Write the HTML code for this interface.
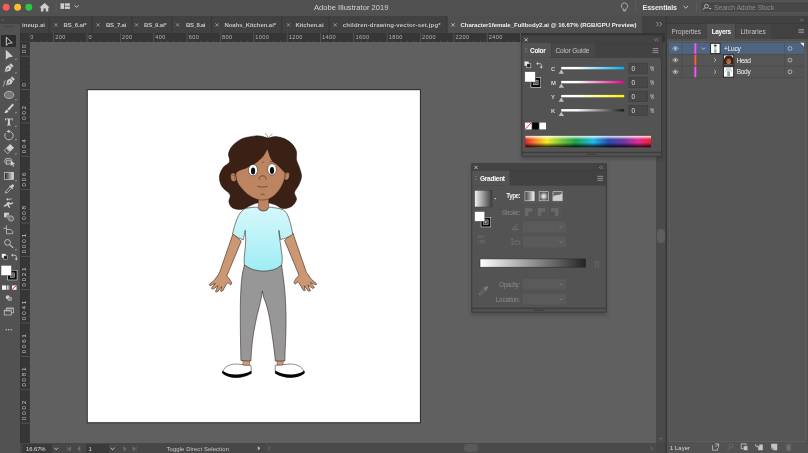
<!DOCTYPE html>
<html>
<head>
<meta charset="utf-8">
<title>Adobe Illustrator 2019</title>
<style>
*{box-sizing:border-box;margin:0;padding:0}
html,body{width:808px;height:453px;overflow:hidden;background:#606060}
body{font-family:"Liberation Sans",sans-serif;font-size:6.5px;color:#d6d6d6;position:relative}
.a{position:absolute}
.t{position:absolute;white-space:pre;line-height:1.15}
svg{position:absolute;overflow:visible}
#w{position:absolute;left:0;top:0;width:808px;height:453px;will-change:transform}

</style>
</head>
<body>
<div id="w">
<div class="a" style="left:30px;top:42px;width:626px;height:401px;background:#606060"></div>
<svg style="left:0;top:0" width="808" height="453" viewBox="0 0 808 453"><rect x="86.8" y="89.2" width="334.1" height="334.1" fill="#2b2b2b"/><rect x="87.8" y="90.2" width="332.1" height="332" fill="#fff"/></svg>
<svg style="left:0;top:0" width="808" height="453" viewBox="0 0 808 453"><defs><linearGradient id="sh" x1="0" x2="0" y1="0" y2="1"><stop offset="0" stop-color="#d6f8fb"/><stop offset="1" stop-color="#9fedf5"/></linearGradient></defs><path d="M268.2 138.0C266.5 137.9 264.1 136.7 262.0 136.3C259.9 136.0 258.3 135.7 255.8 135.9C253.3 136.1 249.7 136.6 247.0 137.3C244.3 138.0 242.2 138.5 239.8 139.9C237.4 141.3 234.2 143.7 232.3 146.0C230.4 148.3 228.9 151.2 228.5 153.8C228.1 156.4 230.5 159.5 229.6 161.8C228.7 164.1 224.7 165.2 223.0 167.7C221.3 170.2 219.6 173.5 219.4 176.7C219.2 179.8 220.2 183.6 222.0 186.6C223.8 189.6 228.8 192.1 229.9 194.6C231.1 197.1 228.6 199.3 228.9 201.5C229.2 203.7 230.2 206.2 231.9 207.5C233.6 208.8 236.8 209.3 238.9 209.5C241.1 209.7 242.5 209.3 244.8 208.5C247.1 207.7 249.8 205.6 252.8 204.5C255.8 203.4 259.1 202.0 262.7 202.0C266.3 202.0 271.3 203.4 274.6 204.5C277.9 205.6 279.8 208.2 282.6 208.5C285.4 208.8 289.2 208.0 291.5 206.5C293.8 205.0 296.0 201.9 296.5 199.6C297.0 197.3 294.2 194.9 294.5 192.6C294.8 190.3 297.3 188.2 298.5 185.6C299.7 182.9 301.3 179.7 301.5 176.7C301.7 173.7 300.3 170.5 299.5 167.7C298.7 164.9 297.0 162.6 296.5 159.8C296.0 157.0 297.1 153.7 296.3 151.0C295.5 148.3 293.7 145.7 291.7 143.6C289.7 141.5 286.8 139.8 284.3 138.6C281.8 137.4 278.9 137.0 276.9 136.7C274.8 136.4 273.4 136.8 272.0 137.0C270.6 137.2 269.9 138.1 268.2 138.0Z" fill="#3b2016" stroke="#1c0e08" stroke-width="0.5"/><path d="M222.400 372.400C223.500 369 225.500 366.800 228.500 365.500C231.500 364.200 235 363.800 238.500 364.200L251 365.300L251.300 373.400C247 376.200 241 377.600 236 377.500C230.500 377.400 225.500 375.600 222.400 372.400Z" fill="#fff" stroke="#2a160e" stroke-width="0.5"/><path d="M222.700 370.800C226.500 373.600 231 374.700 236 374.600C241.500 374.500 247 373.200 251.400 370.700L251.400 373.600C247 376.400 241 377.900 236 377.800C230.500 377.700 225 376 221.900 372.700Z" fill="#050505"/><path d="M275.300 365.300L288 364.200C291.500 363.800 295 364.200 298 365.500C301 366.800 303.200 369 304.400 372.400C301.300 375.500 296.500 377.200 291 377.400C285.500 377.500 279.500 376 275.200 373.200Z" fill="#fff" stroke="#2a160e" stroke-width="0.5"/><path d="M275.200 370.500C279.500 373 285 374.400 290.500 374.500C295.500 374.600 300.300 373.600 304.100 370.800L304.900 372.700C301.800 376 296.500 377.500 291 377.700C285.500 377.800 279.500 376.300 275.200 373.500Z" fill="#050505"/><path d="M242.800 360h6.800l-0.200 5.200h-6.400z M276.900 360h6.400l-0.300 5h-5.800z" fill="#d99a72" stroke="#2a160e" stroke-width="0.4"/><path d="M233.0 233.6 L241.2 241.2 L226.8 276.0 L229.5 279.0 L231.9 283.0 L230.6 285.0 L227.8 282.5 L226.5 284.0 L222.6 291.0 L220.6 291.3 L221.5 286.5 L217.4 292.0 L215.4 291.6 L218.0 285.8 L213.0 289.3 L211.4 288.3 L215.4 283.3 L210.0 285.8 L209.2 284.5 L214.5 280.0 L219.4 273.1Z" fill="#cb9873" stroke="#2a160e" stroke-width="0.55" stroke-linejoin="round"/><path d="M292.8 232.8 L284.6 240.4 L299.0 275.2 L296.3 278.2 L293.9 282.2 L295.2 284.2 L298.0 281.7 L299.3 283.2 L303.2 290.2 L305.2 290.5 L304.3 285.7 L308.4 291.2 L310.4 290.8 L307.8 285.0 L312.8 288.5 L314.4 287.5 L310.4 282.5 L315.8 285.0 L316.6 283.7 L311.3 279.2 L306.4 272.3Z" fill="#cb9873" stroke="#2a160e" stroke-width="0.55" stroke-linejoin="round"/><path d="M244.4 265.0C244.0 266.7 242.8 271.1 242.2 275.0C241.6 278.9 241.2 284.0 240.9 288.7C240.6 293.4 240.5 298.2 240.4 303.0C240.3 307.8 240.3 311.2 240.3 317.4C240.3 323.6 240.4 332.8 240.5 340.0C240.6 347.2 240.8 357.0 240.9 360.4C241.8 360.5 244.3 360.8 246.0 360.9C247.7 361.0 250.1 361.0 250.9 361.0C251.1 358.3 251.5 349.9 252.0 345.0C252.5 340.1 253.1 336.2 253.8 331.7C254.6 327.2 255.6 322.3 256.5 318.0C257.4 313.7 258.7 309.4 259.5 305.9C260.3 302.4 260.9 299.5 261.4 297.0C261.9 294.5 262.2 292.0 262.4 291.0C262.6 292.0 262.9 294.5 263.6 297.0C264.3 299.5 265.7 302.4 266.7 305.9C267.7 309.4 268.7 313.7 269.5 318.0C270.3 322.3 270.9 326.9 271.6 331.7C272.3 336.5 273.2 342.1 273.8 347.0C274.4 351.9 275.1 358.7 275.3 361.0C276.1 361.0 278.4 361.1 280.0 361.1C281.6 361.1 284.0 361.0 284.8 361.0C284.9 358.3 285.2 349.9 285.4 345.0C285.6 340.1 285.8 336.7 285.9 331.7C286.0 326.7 286.1 320.7 286.0 315.0C285.9 309.3 285.6 302.6 285.3 297.3C285.0 292.0 284.5 287.3 284.0 283.0C283.5 278.7 282.9 274.5 282.5 271.5C282.1 268.5 281.8 266.1 281.6 265.0Z" fill="#979797" stroke="#2a160e" stroke-width="0.55" stroke-linejoin="round"/><path d="M258.300 196v10c0 3 2.400 5.600 5.200 5.600s5.200-2.600 5.200-5.600v-10z" fill="#bc8461" stroke="#2a160e" stroke-width="0.4"/><path d="M257.5 207.1C256.2 207.2 252.3 207.3 250.0 207.7C247.7 208.1 245.5 208.2 243.6 209.5C241.7 210.8 240.0 213.1 238.6 215.5C237.2 217.9 236.2 221.0 235.2 224.0C234.2 227.0 233.0 232.0 232.6 233.6C233.4 234.2 235.7 236.3 237.5 237.3C239.3 238.3 242.2 239.4 243.2 239.8C243.4 239.0 244.0 236.6 244.3 235.0C244.6 233.4 245.0 231.1 245.2 230.3C245.3 231.9 245.7 236.7 245.7 240.0C245.7 243.3 245.2 247.0 245.0 250.0C244.8 253.0 244.3 255.5 244.2 258.0C244.1 260.5 244.3 263.7 244.3 264.8C245.6 265.5 248.8 268.1 252.0 269.2C255.2 270.2 259.7 271.1 263.5 271.1C267.3 271.1 271.9 270.2 275.0 269.2C278.1 268.1 280.7 265.5 281.8 264.8C281.9 263.7 282.3 260.8 282.2 258.0C282.1 255.2 281.4 251.3 281.0 248.0C280.6 244.7 280.0 240.9 279.6 238.0C279.2 235.1 279.0 231.6 278.9 230.3C279.0 231.1 279.4 233.5 279.7 235.0C280.0 236.5 280.5 238.8 280.6 239.5C281.7 239.2 285.0 238.5 287.0 237.6C289.0 236.7 291.8 234.9 292.8 234.3C292.4 232.6 291.5 227.2 290.6 224.0C289.7 220.8 288.6 217.2 287.5 214.9C286.4 212.6 285.3 211.5 284.0 210.4C282.7 209.3 281.3 209.1 279.5 208.6C277.7 208.1 274.8 207.8 273.0 207.6C271.2 207.3 269.7 207.2 269.0 207.1C268.7 207.6 267.9 209.3 267.0 210.0C266.1 210.7 264.6 211.0 263.4 211.0C262.2 211.0 260.6 210.7 259.6 210.0C258.6 209.3 257.9 207.6 257.5 207.1Z" fill="url(#sh)" stroke="#2a160e" stroke-width="0.55" stroke-linejoin="round"/><ellipse cx="233.500" cy="177.300" rx="2.900" ry="4.300" fill="#bc8461" stroke="#2a160e" stroke-width="0.45" transform="rotate(-10 233.500 177.300)"/><ellipse cx="286.500" cy="175.800" rx="2.900" ry="4.300" fill="#bc8461" stroke="#2a160e" stroke-width="0.45" transform="rotate(10 286.500 175.800)"/><path d="M232.400 176c0.800-1.600 2.800-1.200 2.800 0.600c0 1.200-1 1.600-1.200 2.800 M287.600 174.400c-0.800-1.600-2.800-1.200-2.800 0.600c0 1.200 1 1.600 1.200 2.800" stroke="#2a160e" stroke-width="0.4" fill="none"/><path d="M267.3 149.0C270.3 149.5 273.3 151.5 276.0 154.0C278.7 156.5 282.0 160.8 283.5 164.0C285.0 167.2 284.9 170.5 285.0 173.0C285.1 175.5 284.7 177.2 284.3 179.0C283.9 180.8 283.7 181.9 282.6 184.0C281.6 186.1 279.9 189.3 278.0 191.6C276.1 193.9 273.5 196.4 271.0 197.8C268.5 199.2 265.6 199.8 263.0 200.0C260.4 200.2 258.1 199.7 255.6 198.8C253.1 197.9 250.4 196.4 247.9 194.5C245.4 192.6 242.6 189.5 240.8 187.3C239.0 185.2 238.0 183.8 237.2 181.6C236.4 179.4 235.9 176.8 236.0 174.0C236.1 171.2 236.2 168.0 238.0 165.0C239.8 162.0 243.7 158.3 247.0 156.0C250.3 153.7 254.6 152.2 258.0 151.0C261.4 149.8 264.3 148.5 267.3 149.0Z" fill="#bc8461" stroke="#2a160e" stroke-width="0.4"/><path d="M267.3 149.3C266.7 150.4 265.2 153.8 263.7 155.8C262.1 157.8 260.0 159.8 258.0 161.5C256.0 163.2 253.7 164.6 251.5 165.8C249.3 167.0 247.1 167.9 245.1 168.7C243.1 169.5 240.8 170.1 239.3 170.8C237.8 171.5 236.7 172.6 236.2 173.0 L232.0 171.0 L229.5 160.0 L235.0 148.0 L250.0 140.5 L267.0 139.0 L284.0 141.5 L293.0 150.0 L294.0 162.0 L290.0 172.0 L285.2 173 L285.2 173.0C284.5 172.3 282.3 170.1 280.9 168.7C279.5 167.3 278.0 165.6 276.6 164.4C275.2 163.2 273.5 162.9 272.3 161.5C271.1 160.1 269.9 156.8 269.4 155.8Z" fill="#3b2016"/><path d="M265 133.400c1.600 1 2.600 2.600 3.200 4.600 M272.600 134.200c-2 0.600-3.200 2-3.800 3.800" stroke="#505050" stroke-width="0.55" fill="none"/><ellipse cx="253" cy="170.100" rx="4.600" ry="5.700" fill="#fff" stroke="#2a160e" stroke-width="0.5"/><ellipse cx="272" cy="169.400" rx="4.400" ry="5.700" fill="#fff" stroke="#2a160e" stroke-width="0.5"/><ellipse cx="253.100" cy="170.900" rx="2.100" ry="3.500" fill="#0a0a0a"/><ellipse cx="272" cy="170.400" rx="2.100" ry="3.500" fill="#0a0a0a"/><path d="M262 162.300l2.200-0.200 M269.600 161.600l2.200 0" stroke="#2a160e" stroke-width="0.4"/><path d="M259.800 179.600c-0.800-0.600-0.900-1.800-0.200-2.600c1.400-1.600 4.600-1.600 6 0c0.700 0.800 0.600 2-0.200 2.600" stroke="#2a160e" stroke-width="0.5" fill="none"/><path d="M257.300 186.300c3.400 1 7 1 10.400 0" stroke="#2a160e" stroke-width="0.5" fill="none"/><path d="M260.500 195.300c1.200-1.600 3-1.600 4.200 0" stroke="#2a160e" stroke-width="0.5" fill="none"/></svg>
<div class="a" style="left:0;top:0;width:808px;height:16px;background:#515151"></div><svg style="left:0;top:0" width="808" height="16" viewBox="0 0 808 16">
<circle cx="6.2" cy="7.3" r="3.45" fill="#fc5b57"/>
<circle cx="17.6" cy="7.3" r="3.45" fill="#fdbc2e"/>
<circle cx="28.8" cy="7.3" r="3.45" fill="#29c941"/>
<path d="M39.5 7.6 L44.6 3 L49.7 7.6 L48.3 7.6 L48.3 11.4 L45.8 11.4 L45.8 8.6 L43.4 8.6 L43.4 11.4 L40.9 11.4 L40.9 7.6 Z" fill="#d0d0d0"/>
<rect x="55.6" y="1.5" width="0.8" height="11" fill="#606060"/>
<rect x="60.5" y="3.3" width="3.6" height="5.6" fill="#d0d0d0"/>
<rect x="64.9" y="3.3" width="5" height="2.4" fill="#d0d0d0"/>
<rect x="64.9" y="6.5" width="5" height="2.4" fill="#d0d0d0"/>
<path d="M74.6 5.3 L76.6 7.3 L78.6 5.3" stroke="#d0d0d0" stroke-width="0.9" fill="none"/>
<path d="M624.5 2.9 a3.1 3.1 0 0 1 1.5 5.8 v1.4 h-3 v-1.4 a3.1 3.1 0 0 1 1.5 -5.8z M623.3 11h2.4" stroke="#d0d0d0" stroke-width="0.7" fill="none"/>
<rect x="635" y="1.5" width="0.8" height="11" fill="#606060"/>
<path d="M683.6 6 L685.8 8.2 L688 6" stroke="#d0d0d0" stroke-width="0.9" fill="none"/>
<rect x="696" y="1.5" width="0.8" height="11" fill="#606060"/>
<rect x="700.6" y="1.8" width="108" height="10.5" fill="#474747" stroke="#5e5e5e" stroke-width="0.6"/>
<circle cx="706.5" cy="6.2" r="1.9" stroke="#c4c4c4" stroke-width="0.8" fill="none"/>
<path d="M705.2 7.600 L702.600 9.800 M708.900 8.600h2.400" stroke="#c4c4c4" stroke-width="0.9" fill="none"/>
</svg><span class="t" style="left:314.00px;top:4px;font-size:7.5px;color:#d4d4d4;letter-spacing:0.050px;">Adobe Illustrator 2019</span><span class="t" style="left:642.50px;top:4px;font-size:7.2px;color:#e8e8e8;font-weight:bold;letter-spacing:-0.106px;">Essentials</span><span class="t" style="left:714.00px;top:4px;font-size:6.9px;color:#8c8c8c;letter-spacing:-0.136px;">Search Adobe Stock</span>
<div class="a" style="left:0;top:16px;width:667px;height:17px;background:#414141"></div><div class="a" style="left:447px;top:16px;width:195px;height:17px;background:#4f4f4f"></div><span class="t" style="left:22.00px;top:22px;font-size:6px;color:#c4c4c4;font-weight:bold;letter-spacing:0.041px;">ineup.ai</span><span class="t" style="left:63.50px;top:22px;font-size:6px;color:#c4c4c4;font-weight:bold;letter-spacing:-0.127px;">BS_6.ai*</span><span class="t" style="left:106.00px;top:22px;font-size:6px;color:#c4c4c4;font-weight:bold;letter-spacing:-0.241px;">BS_7.ai</span><span class="t" style="left:144.00px;top:22px;font-size:6px;color:#c4c4c4;font-weight:bold;letter-spacing:-0.189px;">BS_9.ai*</span><span class="t" style="left:186.00px;top:22px;font-size:6px;color:#c4c4c4;font-weight:bold;letter-spacing:-0.384px;">BS_8.ai</span><span class="t" style="left:224.50px;top:22px;font-size:6px;color:#c4c4c4;font-weight:bold;letter-spacing:-0.070px;">Noahs_Kitchen.ai*</span><span class="t" style="left:295.50px;top:22px;font-size:6px;color:#c4c4c4;font-weight:bold;letter-spacing:-0.069px;">Kitchen.ai</span><span class="t" style="left:342.80px;top:22px;font-size:6px;color:#c4c4c4;font-weight:bold;letter-spacing:0.187px;">children-drawing-vector-set.jpg*</span><span class="t" style="left:460.40px;top:22px;font-size:6px;color:#f0f0f0;font-weight:bold;letter-spacing:-0.004px;">Character1female_Fullbody2.ai @ 16.67% (RGB/GPU Preview)</span><svg style="left:0;top:0" width="808" height="40" viewBox="0 0 808 40"><rect x="48.5" y="16" width="1" height="17" fill="#363636"/><path d="M54.4 23.299999999999997l3.2 3.2m0 -3.2l-3.2 3.2" stroke="#b0b0b0" stroke-width="0.7" fill="none"/><rect x="91.5" y="16" width="1" height="17" fill="#363636"/><path d="M96.4 23.299999999999997l3.2 3.2m0 -3.2l-3.2 3.2" stroke="#b0b0b0" stroke-width="0.7" fill="none"/><rect x="131.5" y="16" width="1" height="17" fill="#363636"/><path d="M134.9 23.299999999999997l3.2 3.2m0 -3.2l-3.2 3.2" stroke="#b0b0b0" stroke-width="0.7" fill="none"/><rect x="171.5" y="16" width="1" height="17" fill="#363636"/><path d="M175.9 23.299999999999997l3.2 3.2m0 -3.2l-3.2 3.2" stroke="#b0b0b0" stroke-width="0.7" fill="none"/><rect x="211.1" y="16" width="1" height="17" fill="#363636"/><path d="M215.4 23.299999999999997l3.2 3.2m0 -3.2l-3.2 3.2" stroke="#b0b0b0" stroke-width="0.7" fill="none"/><rect x="281.2" y="16" width="1" height="17" fill="#363636"/><path d="M286.9 23.299999999999997l3.2 3.2m0 -3.2l-3.2 3.2" stroke="#b0b0b0" stroke-width="0.7" fill="none"/><rect x="328.7" y="16" width="1" height="17" fill="#363636"/><path d="M333.59999999999997 23.299999999999997l3.2 3.2m0 -3.2l-3.2 3.2" stroke="#b0b0b0" stroke-width="0.7" fill="none"/><rect x="446.5" y="16" width="1" height="17" fill="#363636"/><path d="M451.4 23.299999999999997l3.2 3.2m0 -3.2l-3.2 3.2" stroke="#e0e0e0" stroke-width="0.7" fill="none"/><path d="M656.4 22 l2 2.2 l-2 2.2 M659.6 22 l2 2.2 l-2 2.2" stroke="#bdbdbd" stroke-width="0.7" fill="none"/></svg>
<div class="a" style="left:20px;top:33px;width:646px;height:9px;background:#363636"></div><div class="a" style="left:20px;top:42px;width:10.3px;height:401px;background:#363636"></div><span class="t" style="left:30.20px;top:34px;font-size:5.6px;color:#b4b4b4;">0</span><span class="t" style="left:55.25px;top:34px;font-size:5.6px;color:#b4b4b4;letter-spacing:0.385px;">200</span><span class="t" style="left:88.60px;top:34px;font-size:5.6px;color:#b4b4b4;letter-spacing:0.375px;">0</span><span class="t" style="left:121.95px;top:34px;font-size:5.6px;color:#b4b4b4;letter-spacing:0.385px;">200</span><span class="t" style="left:155.30px;top:34px;font-size:5.6px;color:#b4b4b4;letter-spacing:0.385px;">400</span><span class="t" style="left:188.65px;top:34px;font-size:5.6px;color:#b4b4b4;letter-spacing:0.385px;">600</span><span class="t" style="left:222.00px;top:34px;font-size:5.6px;color:#b4b4b4;letter-spacing:0.385px;">800</span><span class="t" style="left:255.35px;top:34px;font-size:5.6px;color:#b4b4b4;letter-spacing:0.387px;">1000</span><span class="t" style="left:288.70px;top:34px;font-size:5.6px;color:#b4b4b4;letter-spacing:0.387px;">1200</span><span class="t" style="left:322.05px;top:34px;font-size:5.6px;color:#b4b4b4;letter-spacing:0.387px;">1400</span><span class="t" style="left:355.40px;top:34px;font-size:5.6px;color:#b4b4b4;letter-spacing:0.387px;">1600</span><span class="t" style="left:388.75px;top:34px;font-size:5.6px;color:#b4b4b4;letter-spacing:0.387px;">1800</span><span class="t" style="left:422.10px;top:34px;font-size:5.6px;color:#b4b4b4;letter-spacing:0.387px;">2000</span><span class="t" style="left:455.45px;top:34px;font-size:5.6px;color:#b4b4b4;letter-spacing:0.387px;">2200</span><span class="t" style="left:488.80px;top:34px;font-size:5.6px;color:#b4b4b4;letter-spacing:0.387px;">2400</span><svg style="left:0;top:0" width="808" height="453" viewBox="0 0 808 453"><rect x="33.29" y="40.6" width="0.7" height="1.4" fill="#5a5a5a"/><rect x="39.96" y="40.6" width="0.7" height="1.4" fill="#5a5a5a"/><rect x="46.63" y="40.6" width="0.7" height="1.4" fill="#5a5a5a"/><rect x="53.25" y="33" width="0.8" height="9" fill="#5a5a5a"/><rect x="59.97" y="40.6" width="0.7" height="1.4" fill="#5a5a5a"/><rect x="66.64" y="40.6" width="0.7" height="1.4" fill="#5a5a5a"/><rect x="73.31" y="40.6" width="0.7" height="1.4" fill="#5a5a5a"/><rect x="79.98" y="40.6" width="0.7" height="1.4" fill="#5a5a5a"/><rect x="86.60" y="33" width="0.8" height="9" fill="#5a5a5a"/><rect x="93.32" y="40.6" width="0.7" height="1.4" fill="#5a5a5a"/><rect x="99.99" y="40.6" width="0.7" height="1.4" fill="#5a5a5a"/><rect x="106.66" y="40.6" width="0.7" height="1.4" fill="#5a5a5a"/><rect x="113.33" y="40.6" width="0.7" height="1.4" fill="#5a5a5a"/><rect x="119.95" y="33" width="0.8" height="9" fill="#5a5a5a"/><rect x="126.67" y="40.6" width="0.7" height="1.4" fill="#5a5a5a"/><rect x="133.34" y="40.6" width="0.7" height="1.4" fill="#5a5a5a"/><rect x="140.01" y="40.6" width="0.7" height="1.4" fill="#5a5a5a"/><rect x="146.68" y="40.6" width="0.7" height="1.4" fill="#5a5a5a"/><rect x="153.30" y="33" width="0.8" height="9" fill="#5a5a5a"/><rect x="160.02" y="40.6" width="0.7" height="1.4" fill="#5a5a5a"/><rect x="166.69" y="40.6" width="0.7" height="1.4" fill="#5a5a5a"/><rect x="173.36" y="40.6" width="0.7" height="1.4" fill="#5a5a5a"/><rect x="180.03" y="40.6" width="0.7" height="1.4" fill="#5a5a5a"/><rect x="186.65" y="33" width="0.8" height="9" fill="#5a5a5a"/><rect x="193.37" y="40.6" width="0.7" height="1.4" fill="#5a5a5a"/><rect x="200.04" y="40.6" width="0.7" height="1.4" fill="#5a5a5a"/><rect x="206.71" y="40.6" width="0.7" height="1.4" fill="#5a5a5a"/><rect x="213.38" y="40.6" width="0.7" height="1.4" fill="#5a5a5a"/><rect x="220.00" y="33" width="0.8" height="9" fill="#5a5a5a"/><rect x="226.72" y="40.6" width="0.7" height="1.4" fill="#5a5a5a"/><rect x="233.39" y="40.6" width="0.7" height="1.4" fill="#5a5a5a"/><rect x="240.06" y="40.6" width="0.7" height="1.4" fill="#5a5a5a"/><rect x="246.73" y="40.6" width="0.7" height="1.4" fill="#5a5a5a"/><rect x="253.35" y="33" width="0.8" height="9" fill="#5a5a5a"/><rect x="260.07" y="40.6" width="0.7" height="1.4" fill="#5a5a5a"/><rect x="266.74" y="40.6" width="0.7" height="1.4" fill="#5a5a5a"/><rect x="273.41" y="40.6" width="0.7" height="1.4" fill="#5a5a5a"/><rect x="280.08" y="40.6" width="0.7" height="1.4" fill="#5a5a5a"/><rect x="286.70" y="33" width="0.8" height="9" fill="#5a5a5a"/><rect x="293.42" y="40.6" width="0.7" height="1.4" fill="#5a5a5a"/><rect x="300.09" y="40.6" width="0.7" height="1.4" fill="#5a5a5a"/><rect x="306.76" y="40.6" width="0.7" height="1.4" fill="#5a5a5a"/><rect x="313.43" y="40.6" width="0.7" height="1.4" fill="#5a5a5a"/><rect x="320.05" y="33" width="0.8" height="9" fill="#5a5a5a"/><rect x="326.77" y="40.6" width="0.7" height="1.4" fill="#5a5a5a"/><rect x="333.44" y="40.6" width="0.7" height="1.4" fill="#5a5a5a"/><rect x="340.11" y="40.6" width="0.7" height="1.4" fill="#5a5a5a"/><rect x="346.78" y="40.6" width="0.7" height="1.4" fill="#5a5a5a"/><rect x="353.40" y="33" width="0.8" height="9" fill="#5a5a5a"/><rect x="360.12" y="40.6" width="0.7" height="1.4" fill="#5a5a5a"/><rect x="366.79" y="40.6" width="0.7" height="1.4" fill="#5a5a5a"/><rect x="373.46" y="40.6" width="0.7" height="1.4" fill="#5a5a5a"/><rect x="380.13" y="40.6" width="0.7" height="1.4" fill="#5a5a5a"/><rect x="386.75" y="33" width="0.8" height="9" fill="#5a5a5a"/><rect x="393.47" y="40.6" width="0.7" height="1.4" fill="#5a5a5a"/><rect x="400.14" y="40.6" width="0.7" height="1.4" fill="#5a5a5a"/><rect x="406.81" y="40.6" width="0.7" height="1.4" fill="#5a5a5a"/><rect x="413.48" y="40.6" width="0.7" height="1.4" fill="#5a5a5a"/><rect x="420.10" y="33" width="0.8" height="9" fill="#5a5a5a"/><rect x="426.82" y="40.6" width="0.7" height="1.4" fill="#5a5a5a"/><rect x="433.49" y="40.6" width="0.7" height="1.4" fill="#5a5a5a"/><rect x="440.16" y="40.6" width="0.7" height="1.4" fill="#5a5a5a"/><rect x="446.83" y="40.6" width="0.7" height="1.4" fill="#5a5a5a"/><rect x="453.45" y="33" width="0.8" height="9" fill="#5a5a5a"/><rect x="460.17" y="40.6" width="0.7" height="1.4" fill="#5a5a5a"/><rect x="466.84" y="40.6" width="0.7" height="1.4" fill="#5a5a5a"/><rect x="473.51" y="40.6" width="0.7" height="1.4" fill="#5a5a5a"/><rect x="480.18" y="40.6" width="0.7" height="1.4" fill="#5a5a5a"/><rect x="486.80" y="33" width="0.8" height="9" fill="#5a5a5a"/><rect x="493.52" y="40.6" width="0.7" height="1.4" fill="#5a5a5a"/><rect x="500.19" y="40.6" width="0.7" height="1.4" fill="#5a5a5a"/><rect x="506.86" y="40.6" width="0.7" height="1.4" fill="#5a5a5a"/><rect x="513.53" y="40.6" width="0.7" height="1.4" fill="#5a5a5a"/><rect x="520.15" y="33" width="0.8" height="9" fill="#5a5a5a"/><rect x="28.900000000000002" y="42.56" width="1.4" height="0.7" fill="#5a5a5a"/><rect x="28.900000000000002" y="49.23" width="1.4" height="0.7" fill="#5a5a5a"/><rect x="20" y="55.85" width="10.3" height="0.8" fill="#5a5a5a"/><rect x="28.900000000000002" y="62.57" width="1.4" height="0.7" fill="#5a5a5a"/><rect x="28.900000000000002" y="69.24" width="1.4" height="0.7" fill="#5a5a5a"/><rect x="28.900000000000002" y="75.91" width="1.4" height="0.7" fill="#5a5a5a"/><rect x="28.900000000000002" y="82.58" width="1.4" height="0.7" fill="#5a5a5a"/><rect x="20" y="89.20" width="10.3" height="0.8" fill="#5a5a5a"/><rect x="28.900000000000002" y="95.92" width="1.4" height="0.7" fill="#5a5a5a"/><rect x="28.900000000000002" y="102.59" width="1.4" height="0.7" fill="#5a5a5a"/><rect x="28.900000000000002" y="109.26" width="1.4" height="0.7" fill="#5a5a5a"/><rect x="28.900000000000002" y="115.93" width="1.4" height="0.7" fill="#5a5a5a"/><rect x="20" y="122.55" width="10.3" height="0.8" fill="#5a5a5a"/><rect x="28.900000000000002" y="129.27" width="1.4" height="0.7" fill="#5a5a5a"/><rect x="28.900000000000002" y="135.94" width="1.4" height="0.7" fill="#5a5a5a"/><rect x="28.900000000000002" y="142.61" width="1.4" height="0.7" fill="#5a5a5a"/><rect x="28.900000000000002" y="149.28" width="1.4" height="0.7" fill="#5a5a5a"/><rect x="20" y="155.90" width="10.3" height="0.8" fill="#5a5a5a"/><rect x="28.900000000000002" y="162.62" width="1.4" height="0.7" fill="#5a5a5a"/><rect x="28.900000000000002" y="169.29" width="1.4" height="0.7" fill="#5a5a5a"/><rect x="28.900000000000002" y="175.96" width="1.4" height="0.7" fill="#5a5a5a"/><rect x="28.900000000000002" y="182.63" width="1.4" height="0.7" fill="#5a5a5a"/><rect x="20" y="189.25" width="10.3" height="0.8" fill="#5a5a5a"/><rect x="28.900000000000002" y="195.97" width="1.4" height="0.7" fill="#5a5a5a"/><rect x="28.900000000000002" y="202.64" width="1.4" height="0.7" fill="#5a5a5a"/><rect x="28.900000000000002" y="209.31" width="1.4" height="0.7" fill="#5a5a5a"/><rect x="28.900000000000002" y="215.98" width="1.4" height="0.7" fill="#5a5a5a"/><rect x="20" y="222.60" width="10.3" height="0.8" fill="#5a5a5a"/><rect x="28.900000000000002" y="229.32" width="1.4" height="0.7" fill="#5a5a5a"/><rect x="28.900000000000002" y="235.99" width="1.4" height="0.7" fill="#5a5a5a"/><rect x="28.900000000000002" y="242.66" width="1.4" height="0.7" fill="#5a5a5a"/><rect x="28.900000000000002" y="249.33" width="1.4" height="0.7" fill="#5a5a5a"/><rect x="20" y="255.95" width="10.3" height="0.8" fill="#5a5a5a"/><rect x="28.900000000000002" y="262.67" width="1.4" height="0.7" fill="#5a5a5a"/><rect x="28.900000000000002" y="269.34" width="1.4" height="0.7" fill="#5a5a5a"/><rect x="28.900000000000002" y="276.01" width="1.4" height="0.7" fill="#5a5a5a"/><rect x="28.900000000000002" y="282.68" width="1.4" height="0.7" fill="#5a5a5a"/><rect x="20" y="289.30" width="10.3" height="0.8" fill="#5a5a5a"/><rect x="28.900000000000002" y="296.02" width="1.4" height="0.7" fill="#5a5a5a"/><rect x="28.900000000000002" y="302.69" width="1.4" height="0.7" fill="#5a5a5a"/><rect x="28.900000000000002" y="309.36" width="1.4" height="0.7" fill="#5a5a5a"/><rect x="28.900000000000002" y="316.03" width="1.4" height="0.7" fill="#5a5a5a"/><rect x="20" y="322.65" width="10.3" height="0.8" fill="#5a5a5a"/><rect x="28.900000000000002" y="329.37" width="1.4" height="0.7" fill="#5a5a5a"/><rect x="28.900000000000002" y="336.04" width="1.4" height="0.7" fill="#5a5a5a"/><rect x="28.900000000000002" y="342.71" width="1.4" height="0.7" fill="#5a5a5a"/><rect x="28.900000000000002" y="349.38" width="1.4" height="0.7" fill="#5a5a5a"/><rect x="20" y="356.00" width="10.3" height="0.8" fill="#5a5a5a"/><rect x="28.900000000000002" y="362.72" width="1.4" height="0.7" fill="#5a5a5a"/><rect x="28.900000000000002" y="369.39" width="1.4" height="0.7" fill="#5a5a5a"/><rect x="28.900000000000002" y="376.06" width="1.4" height="0.7" fill="#5a5a5a"/><rect x="28.900000000000002" y="382.73" width="1.4" height="0.7" fill="#5a5a5a"/><rect x="20" y="389.35" width="10.3" height="0.8" fill="#5a5a5a"/><rect x="28.900000000000002" y="396.07" width="1.4" height="0.7" fill="#5a5a5a"/><rect x="28.900000000000002" y="402.74" width="1.4" height="0.7" fill="#5a5a5a"/><rect x="28.900000000000002" y="409.41" width="1.4" height="0.7" fill="#5a5a5a"/><rect x="28.900000000000002" y="416.08" width="1.4" height="0.7" fill="#5a5a5a"/><rect x="20" y="422.70" width="10.3" height="0.8" fill="#5a5a5a"/><rect x="28.900000000000002" y="429.42" width="1.4" height="0.7" fill="#5a5a5a"/><rect x="28.900000000000002" y="436.09" width="1.4" height="0.7" fill="#5a5a5a"/><rect x="20" y="33" width="10.3" height="9" fill="#363636"/><path d="M21 41.6h9 M30 34v8" stroke="#666" stroke-width="0.5" stroke-dasharray="0.7 0.9" fill="none"/><rect x="20" y="33" width="1" height="420" fill="#333"/></svg><svg style="left:0;top:0" width="40" height="453" viewBox="0 0 40 453" font-family="Liberation Sans, sans-serif" font-size="5.6" fill="#c4c4c4"><text transform="translate(25.95 46.15) rotate(-90) scale(1.12 0.86)" text-anchor="middle">0</text><text transform="translate(25.95 51.35) rotate(-90) scale(1.12 0.86)" text-anchor="middle">0</text><text transform="translate(25.95 84.70) rotate(-90) scale(1.12 0.86)" text-anchor="middle">0</text><text transform="translate(25.95 107.65) rotate(-90) scale(1.12 0.86)" text-anchor="middle">2</text><text transform="translate(25.95 112.85) rotate(-90) scale(1.12 0.86)" text-anchor="middle">0</text><text transform="translate(25.95 118.05) rotate(-90) scale(1.12 0.86)" text-anchor="middle">0</text><text transform="translate(25.95 141.00) rotate(-90) scale(1.12 0.86)" text-anchor="middle">4</text><text transform="translate(25.95 146.20) rotate(-90) scale(1.12 0.86)" text-anchor="middle">0</text><text transform="translate(25.95 151.40) rotate(-90) scale(1.12 0.86)" text-anchor="middle">0</text><text transform="translate(25.95 174.35) rotate(-90) scale(1.12 0.86)" text-anchor="middle">6</text><text transform="translate(25.95 179.55) rotate(-90) scale(1.12 0.86)" text-anchor="middle">0</text><text transform="translate(25.95 184.75) rotate(-90) scale(1.12 0.86)" text-anchor="middle">0</text><text transform="translate(25.95 207.70) rotate(-90) scale(1.12 0.86)" text-anchor="middle">8</text><text transform="translate(25.95 212.90) rotate(-90) scale(1.12 0.86)" text-anchor="middle">0</text><text transform="translate(25.95 218.10) rotate(-90) scale(1.12 0.86)" text-anchor="middle">0</text><text transform="translate(25.95 235.85) rotate(-90) scale(1.12 0.86)" text-anchor="middle">1</text><text transform="translate(25.95 241.05) rotate(-90) scale(1.12 0.86)" text-anchor="middle">0</text><text transform="translate(25.95 246.25) rotate(-90) scale(1.12 0.86)" text-anchor="middle">0</text><text transform="translate(25.95 251.45) rotate(-90) scale(1.12 0.86)" text-anchor="middle">0</text><text transform="translate(25.95 269.20) rotate(-90) scale(1.12 0.86)" text-anchor="middle">1</text><text transform="translate(25.95 274.40) rotate(-90) scale(1.12 0.86)" text-anchor="middle">2</text><text transform="translate(25.95 279.60) rotate(-90) scale(1.12 0.86)" text-anchor="middle">0</text><text transform="translate(25.95 284.80) rotate(-90) scale(1.12 0.86)" text-anchor="middle">0</text><text transform="translate(25.95 302.55) rotate(-90) scale(1.12 0.86)" text-anchor="middle">1</text><text transform="translate(25.95 307.75) rotate(-90) scale(1.12 0.86)" text-anchor="middle">4</text><text transform="translate(25.95 312.95) rotate(-90) scale(1.12 0.86)" text-anchor="middle">0</text><text transform="translate(25.95 318.15) rotate(-90) scale(1.12 0.86)" text-anchor="middle">0</text><text transform="translate(25.95 335.90) rotate(-90) scale(1.12 0.86)" text-anchor="middle">1</text><text transform="translate(25.95 341.10) rotate(-90) scale(1.12 0.86)" text-anchor="middle">6</text><text transform="translate(25.95 346.30) rotate(-90) scale(1.12 0.86)" text-anchor="middle">0</text><text transform="translate(25.95 351.50) rotate(-90) scale(1.12 0.86)" text-anchor="middle">0</text><text transform="translate(25.95 369.25) rotate(-90) scale(1.12 0.86)" text-anchor="middle">1</text><text transform="translate(25.95 374.45) rotate(-90) scale(1.12 0.86)" text-anchor="middle">8</text><text transform="translate(25.95 379.65) rotate(-90) scale(1.12 0.86)" text-anchor="middle">0</text><text transform="translate(25.95 384.85) rotate(-90) scale(1.12 0.86)" text-anchor="middle">0</text><text transform="translate(25.95 402.60) rotate(-90) scale(1.12 0.86)" text-anchor="middle">2</text><text transform="translate(25.95 407.80) rotate(-90) scale(1.12 0.86)" text-anchor="middle">0</text><text transform="translate(25.95 413.00) rotate(-90) scale(1.12 0.86)" text-anchor="middle">0</text><text transform="translate(25.95 418.20) rotate(-90) scale(1.12 0.86)" text-anchor="middle">0</text></svg>
<div class="a" style="left:0;top:16px;width:20px;height:437px;background:#525252"></div><div class="a" style="left:0;top:16px;width:20px;height:8px;background:#424242"></div><div class="a" style="left:1.3px;top:35px;width:15px;height:11.7px;background:#2d2d2d;border-radius:1px"></div><svg style="left:0;top:0" width="22" height="453" viewBox="0 0 22 453"><path d="M1.4 18.9l0.9 0.9l-0.9 0.9 M3.2 18.9l0.9 0.9l-0.9 0.9" stroke="#8a8a8a" stroke-width="0.5" fill="none"/><rect x="3" y="26" width="11" height="1.2" fill="#464646"/><path d="M6.3 37.2 L6.3 45.4 L8.5 43.3 L12.3 42.9 Z" fill="none" stroke="#dedede" stroke-width="0.9" stroke-linejoin="miter"/><path d="M5.8 49.8 L5.8 59.8 L8.4 57.4 L13 56.4 Z" fill="#cfcfcf"/><path d="M16.4 58.2v1.5h-1.5z" fill="#cfcfcf"/><g transform="translate(8.5 68.3) rotate(45)"><path d="M-1.9 -5.2h3.8v2h-3.8z M-1.9 -2.6 h3.8 l1 3.2 l-2.9 5 l-2.9 -5z" fill="#cfcfcf"/><path d="M0 5v-4" stroke="#525252" stroke-width="0.6"/><circle cx="0" cy="0.6" r="0.8" fill="#525252"/></g><path d="M16.4 71.7v1.5h-1.5z" fill="#cfcfcf"/><g transform="translate(9.8 81.6) rotate(45)"><path d="M-1.9 -5.2h3.8v2h-3.8z M-1.9 -2.6 h3.8 l1 3.2 l-2.9 5 l-2.9 -5z" fill="#cfcfcf"/><path d="M0 5v-4" stroke="#525252" stroke-width="0.6"/><circle cx="0" cy="0.6" r="0.8" fill="#525252"/></g><path d="M3.4 86.6c-1.4-1.6 1.8-1.6 0.9-3.6c-0.6-1.4 0.4-2.4 1.4-2.2" stroke="#cfcfcf" stroke-width="0.7" fill="none"/><ellipse cx="9.1" cy="94.9" rx="4.7" ry="3.6" fill="#777" stroke="#cfcfcf" stroke-width="0.7"/><path d="M16.4 98.7v1.5h-1.5z" fill="#cfcfcf"/><path d="M12.6 103.6 L14 104.8 L9 110.4 L7.4 109z" fill="#cfcfcf"/><path d="M6.9 109.6 L8.4 111 C8.2 112.8 6 113.2 4.2 112.9 C5.6 112.2 5 110.2 6.900 109.6z" fill="#cfcfcf"/><path d="M16.4 111.7v1.5h-1.5z" fill="#cfcfcf"/><path d="M5 118.4h7.800v2.200h-0.700c-0.100-0.900-0.500-1.300-1.300-1.300h-0.900v4.800c0 0.600 0.300 0.800 1.100 0.800v0.600h-4.200v-0.600c0.800 0 1.100-0.200 1.100-0.800v-4.800h-0.900c-0.800 0-1.200 0.400-1.300 1.300h-0.700z" fill="#cfcfcf"/><path d="M16.4 125.2v1.5h-1.5z" fill="#cfcfcf"/><path d="M5.5 133.2a4.200 4.200 0 1 0 3.400-1.800" stroke="#cfcfcf" stroke-width="0.8" fill="none"/><path d="M9.300 129.500l-2.800 2l3 1.500z" fill="#cfcfcf"/><path d="M16.4 138.7v1.5h-1.5z" fill="#cfcfcf"/><g transform="translate(9 149) rotate(-45)"><rect x="-1" y="-2.700" width="5.400" height="5.400" fill="#cfcfcf"/><rect x="-4.200" y="-2.400" width="2.800" height="4.800" fill="none" stroke="#cfcfcf" stroke-width="0.7"/></g><path d="M16.4 152.7v1.5h-1.5z" fill="#cfcfcf"/><g transform="translate(0.3 1)"><path d="M4.4 159.8c0-2 2-2.8 3.4-2.2c1.6-1 4 0 3.6 2.2c0.8 1.8-0.4 3.4-2.4 3.2c-1.6 1-3.4 0.6-3.8-0.8c-0.9-0.6-1.1-1.6-0.8-2.4z" fill="#6a6a6a" stroke="#cfcfcf" stroke-width="0.7"/><path d="M6.2 159.4h4.4 M6.2 159.4v3.6" stroke="#cfcfcf" stroke-width="0.6"/><path d="M10.4 159.6l4.4 3.4l-2 0.4l1 2l-0.9 0.4l-1-2l-1.5 1.2z" fill="#cfcfcf"/></g><defs><linearGradient id="tg" x1="0" x2="1"><stop offset="0" stop-color="#222"/><stop offset="1" stop-color="#e6e6e6"/></linearGradient></defs><rect x="4.5" y="172.300" width="9" height="7.200" fill="url(#tg)" stroke="#cfcfcf" stroke-width="0.7"/><path d="M16.4 179.7v1.5h-1.5z" fill="#cfcfcf"/><g transform="translate(8.8 189.6) rotate(45)"><path d="M-1.3 -5.6 a1.3 1.3 0 0 1 2.6 0 v1.8 h0.9 v1.2 h-4.4 v-1.2 h0.9z" fill="#cfcfcf"/><path d="M-1 -2.4 v5.6 l1 1.8 l1-1.8 v-5.6" fill="none" stroke="#cfcfcf" stroke-width="0.7"/></g><path d="M3.6 205.6c1.6-0.4 2.6-1.4 3.4-2.8c0.6-1 1.8-1.2 2.6-0.4c0.8 0.8 1.6 0.6 2.6-0.2l1.2 0.8c-1.2 1.6-2.8 1.8-4 0.9c-0.6 1.6-0.4 2.2 0.9 3.2l-0.8 0.8c-1.4-0.8-2-1.8-1.8-3c-1 1-2.2 1.6-3.8 1.8z" fill="#cfcfcf"/><circle cx="7.6" cy="199.3" r="1.1" fill="#cfcfcf"/><path d="M9 199.6l3-1" stroke="#cfcfcf" stroke-width="0.7"/><g transform="translate(-0.2 1.1)"><rect x="4.2" y="211.6" width="5" height="4.6" fill="#cfcfcf"/><circle cx="11.2" cy="217.4" r="2.6" fill="#6a6a6a" stroke="#cfcfcf" stroke-width="0.7"/><circle cx="8.6" cy="215.6" r="2.2" fill="#8a8a8a"/></g><path d="M6.500 225.300v8.400h6.200 M3.400 228.300h3.100" stroke="#cfcfcf" stroke-width="0.7" fill="none"/><path d="M6.500 229.500h4.400l1.800 1.800v2.400" stroke="#cfcfcf" stroke-width="0.7" fill="none"/><circle cx="7.500" cy="242.400" r="2.900" fill="none" stroke="#cfcfcf" stroke-width="0.8"/><path d="M9.600 244.700l3.600 3.200" stroke="#cfcfcf" stroke-width="1.1"/><path d="M16.4 248.7v1.5h-1.5z" fill="#cfcfcf"/><rect x="2" y="254" width="3.6" height="3.6" fill="#fff" stroke="#ddd" stroke-width="0.4"/><rect x="3.8" y="255.8" width="3.8" height="3.8" fill="#222" stroke="#ddd" stroke-width="0.5"/><path d="M12.6 255.2h2.4c0.9 0 1.3 0.6 1.3 1.4v2.4" stroke="#cfcfcf" stroke-width="0.8" fill="none"/><path d="M12.9 253.6l-1.8 1.6l1.8 1.6z M14.7 258.6l1.6 1.8l1.6-1.8z" fill="#cfcfcf"/><rect x="7.5" y="270" width="9.8" height="10.2" fill="#fff"/><rect x="8" y="270.5" width="8.8" height="9.2" fill="#0a0a0a"/><rect x="10.3" y="272.9" width="4.2" height="4.4" fill="#444" stroke="#e6e6e6" stroke-width="0.5"/><rect x="11.6" y="274.2" width="1.8" height="1.8" fill="none" stroke="#bbb" stroke-width="0.4"/><rect x="1" y="265.3" width="10.5" height="10.2" fill="#fff" stroke="#4a4a4a" stroke-width="0.5"/><defs><linearGradient id="tg2" x1="0" x2="1"><stop offset="0" stop-color="#eee"/><stop offset="1" stop-color="#333"/></linearGradient></defs><rect x="2" y="285.4" width="4.2" height="4.4" fill="#f4f4f4"/><rect x="6.9" y="285.4" width="4.2" height="4.4" fill="url(#tg2)"/><rect x="11.9" y="285.4" width="4.6" height="4.4" fill="#f4f4f4"/><path d="M12.1 289.6l4.2-4" stroke="#e8212b" stroke-width="1"/><circle cx="7.8" cy="297.2" r="2" fill="#cfcfcf"/><rect x="8" y="297.2" width="3.6" height="3.4" fill="#8c8c8c" stroke="#cfcfcf" stroke-width="0.4"/><rect x="6.6" y="308" width="7" height="4.8" fill="#525252" stroke="#cfcfcf" stroke-width="0.7"/><rect x="4.2" y="310.2" width="7" height="4.8" fill="#525252" stroke="#cfcfcf" stroke-width="0.7"/><path d="M4.2 310.9h7 M6.6 308.7h7" stroke="#cfcfcf" stroke-width="0.7"/><circle cx="6.2" cy="329.8" r="0.7" fill="#cfcfcf"/><circle cx="8.7" cy="329.8" r="0.7" fill="#cfcfcf"/><circle cx="11.2" cy="329.8" r="0.7" fill="#cfcfcf"/></svg>
<div class="a" style="left:20px;top:443px;width:646px;height:10px;background:#474747"></div><div class="a" style="left:22px;top:444px;width:29.500px;height:9px;background:#3a3a3a"></div><div class="a" style="left:86px;top:444px;width:22.500px;height:9px;background:#3a3a3a"></div><div class="a" style="left:265px;top:443px;width:391px;height:10px;background:#4a4a4a"></div><div class="a" style="left:464px;top:444px;width:14.300px;height:8px;border-radius:4px;background:#5a5a5a"></div><div class="a" style="left:655.8px;top:42px;width:9.4px;height:401px;background:#4a4a4a"></div><div class="a" style="left:655.8px;top:443px;width:10.4px;height:10px;background:#464646"></div><div class="a" style="left:657px;top:229px;width:8px;height:14px;border-radius:4px;background:#5e5e5e"></div><div class="a" style="left:665px;top:33px;width:2px;height:420px;background:#404040"></div><span class="t" style="left:26.00px;top:446px;font-size:5.9px;color:#dcdcdc;letter-spacing:-0.081px;">16.67%</span><span class="t" style="left:88.60px;top:446px;font-size:5.9px;color:#dcdcdc;">1</span><span class="t" style="left:166.50px;top:446px;font-size:5.9px;color:#c8c8c8;letter-spacing:0.098px;">Toggle Direct Selection</span><svg style="left:0;top:0" width="808" height="453" viewBox="0 0 808 453"><path d="M54.300 447.800l1.900 1.900l1.900-1.900 M110.700 447.800l1.900 1.900l1.900-1.900" stroke="#d4d4d4" stroke-width="0.9" fill="none"/><path d="M70.600 446.600l-2.400 2.200l2.400 2.200z M67.400 446.600v4.400 M80 446.600l-2.400 2.200l2.400 2.200z M123.800 446.600l2.400 2.200l-2.400 2.200z M133 446.600l2.400 2.200l-2.400 2.200z M136.200 446.600v4.400" stroke="#6e6e6e" stroke-width="0.6" fill="#6e6e6e"/><path d="M257.8 446.1l2.6 2.2l-2.6 2.2z" fill="#b8b8b8"/><path d="M270 446.6l-1.6 1.7l1.6 1.7 M650.8 446.6l1.6 1.7l-1.6 1.7 M658.800 437.800l1.700 1.600l1.700-1.600" stroke="#8a8a8a" stroke-width="0.6" fill="none"/></svg>
<div class="a" style="left:667px;top:16px;width:141px;height:437px;background:#525252"></div><div class="a" style="left:669.5px;top:42.2px;width:135px;height:399.2px;background:#555555;outline:0.6px solid #5e5e5e"></div><div class="a" style="left:667px;top:16px;width:141px;height:7px;background:#414141"></div><div class="a" style="left:667px;top:23px;width:141px;height:16px;background:#414141"></div><div class="a" style="left:667px;top:23.5px;width:40px;height:15px;background:#464646"></div><div class="a" style="left:736px;top:23.5px;width:35px;height:15px;background:#464646"></div><div class="a" style="left:707.3px;top:23px;width:28.2px;height:16px;background:#525252"></div><span class="t" style="left:671.60px;top:28px;font-size:6.4px;color:#c6c6c6;letter-spacing:0.036px;">Properties</span><span class="t" style="left:711.70px;top:28px;font-size:6.4px;color:#ffffff;font-weight:bold;letter-spacing:-0.268px;">Layers</span><span class="t" style="left:740.40px;top:28px;font-size:6.4px;color:#c6c6c6;letter-spacing:0.098px;">Libraries</span><div class="a" style="left:669.8px;top:42.7px;width:134.2px;height:11.5px;background:#4d6581"></div><div class="a" style="left:669.8px;top:54.2px;width:134.2px;height:11.799999999999997px;background:#555555"></div><div class="a" style="left:669.8px;top:66px;width:134.2px;height:11.700000000000003px;background:#555555"></div><span class="t" style="left:724.00px;top:45px;font-size:6.6px;color:#f0f0f0;letter-spacing:-0.256px;">+Lucy</span><span class="t" style="left:736.70px;top:57px;font-size:6.6px;color:#f0f0f0;letter-spacing:-0.516px;">Head</span><span class="t" style="left:736.70px;top:68px;font-size:6.6px;color:#f0f0f0;letter-spacing:-0.333px;">Body</span><span class="t" style="left:670.00px;top:445px;font-size:5.8px;color:#dcdcdc;letter-spacing:0.094px;">1 Layer</span><svg style="left:0;top:0" width="808" height="453" viewBox="0 0 808 453"><rect x="666" y="16" width="1" height="437" fill="#393939"/><rect x="667" y="23" width="141" height="0.7" fill="#3a3a3a"/><path d="M800.200 18.800l1.100 1.200l-1.100 1.200 M802.200 18.800l1.100 1.200l-1.100 1.200" stroke="#9a9a9a" stroke-width="0.5" fill="none"/><path d="M798.4 29.4h5.6 M798.4 31h5.6 M798.4 32.6h5.6" stroke="#a8a8a8" stroke-width="0.7"/><rect x="669.8" y="53.900000000000006" width="134.2" height="0.6" fill="#484848"/><rect x="669.8" y="65.7" width="134.2" height="0.6" fill="#484848"/><rect x="669.8" y="77.4" width="134.2" height="0.6" fill="#484848"/><rect x="681.7" y="42.7" width="0.6" height="11.5" fill="#3f5470"/><rect x="784.3" y="42.7" width="0.6" height="11.5" fill="#3f5470"/><path d="M672.6 48.45c1.6-2.4 4-2.4 5.6 0c-1.6 2.4-4 2.4-5.6 0z" fill="none" stroke="#dcdcdc" stroke-width="0.6"/><circle cx="675.4" cy="48.45" r="1.1" fill="#dcdcdc"/><circle cx="790" cy="48.45" r="1.900" fill="none" stroke="#d0d0d0" stroke-width="0.7"/><rect x="681.7" y="54.2" width="0.6" height="11.799999999999997" fill="#4a4a4a"/><rect x="784.3" y="54.2" width="0.6" height="11.799999999999997" fill="#4a4a4a"/><path d="M672.6 60.1c1.6-2.4 4-2.4 5.6 0c-1.6 2.4-4 2.4-5.6 0z" fill="none" stroke="#dcdcdc" stroke-width="0.6"/><circle cx="675.4" cy="60.1" r="1.1" fill="#dcdcdc"/><circle cx="790" cy="60.1" r="1.900" fill="none" stroke="#d0d0d0" stroke-width="0.7"/><rect x="681.7" y="66" width="0.6" height="11.700000000000003" fill="#4a4a4a"/><rect x="784.3" y="66" width="0.6" height="11.700000000000003" fill="#4a4a4a"/><path d="M672.6 71.85c1.6-2.4 4-2.4 5.6 0c-1.6 2.4-4 2.4-5.6 0z" fill="none" stroke="#dcdcdc" stroke-width="0.6"/><circle cx="675.4" cy="71.85" r="1.1" fill="#dcdcdc"/><circle cx="790" cy="71.85" r="1.900" fill="none" stroke="#d0d0d0" stroke-width="0.7"/><rect x="694.4" y="43.2" width="1.9" height="10.6" fill="#ff4dff"/><rect x="694.4" y="54.8" width="1.9" height="10.6" fill="#ff5a3c"/><rect x="694.4" y="66.6" width="1.9" height="10.6" fill="#ff4dff"/><path d="M701.6 47.6l1.8 1.8l1.8-1.8" stroke="#e0e0e0" stroke-width="0.7" fill="none"/><path d="M714.2 58.3l1.8 1.8l-1.8 1.8 M714.2 70.1l1.8 1.8l-1.8 1.8" stroke="#e0e0e0" stroke-width="0.7" fill="none"/><rect x="710.6" y="43.3" width="9.5" height="10.3" fill="#fff" stroke="#1e1e1e" stroke-width="0.9"/><ellipse cx="715.3" cy="45.6" rx="1.3" ry="1.2" fill="#4a2a1c"/><rect x="714.2" y="46.8" width="2.3" height="2.6" fill="#9fe4ee"/><rect x="714.3" y="49.4" width="2.1" height="3.4" fill="#9a9a9a"/><rect x="723.4" y="55" width="10.3" height="10.3" fill="#fff" stroke="#1e1e1e" stroke-width="0.9"/><path d="M724 64.800c-0.800-3 0-7.400 2-8.600c2-1.200 4.800-1 6.200 0.400c1.400 1.600 1.600 5.400 1 8.200z" fill="#3e2117"/><ellipse cx="728.700" cy="61.400" rx="2.300" ry="2.700" fill="#b5754f"/><path d="M727.500 60.800h0.800 M729.600 60.800h0.800" stroke="#111" stroke-width="0.7"/><rect x="723.4" y="66.8" width="10.3" height="10.3" fill="#fff" stroke="#1e1e1e" stroke-width="0.9"/><rect x="727" y="68" width="3.2" height="3.4" fill="#a5e8f0"/><rect x="727.2" y="71.4" width="2.8" height="4.6" fill="#9a9a9a"/><path d="M727 68.4l-1.6 3.4 M730.2 68.4l1.6 3.4" stroke="#c08a66" stroke-width="0.6"/><path d="M800.2 42.7h3.8v3.8z" fill="#f0f0f0"/><path d="M712.600 445.200v5h5v-2.200 M715 443.900h3.600v3.600 M718.600 443.900l-3 3" stroke="#c4c4c4" stroke-width="0.8" fill="none"/><circle cx="731.200" cy="445.800" r="2" stroke="#707070" stroke-width="0.7" fill="none"/><path d="M729.800 447.300l-2.600 2.800" stroke="#707070" stroke-width="0.8"/><rect x="741.200" y="443.900" width="4.800" height="4.800" fill="none" stroke="#c4c4c4" stroke-width="0.8"/><rect x="743.400" y="446" width="4.400" height="4.400" fill="#c4c4c4" stroke="#525252" stroke-width="0.4"/><path d="M755.800 444v2.400h2.600" stroke="#c4c4c4" stroke-width="0.8" fill="none"/><path d="M757.400 445.400l1.600 1l-1.600 1z" fill="#c4c4c4"/><path d="M759.200 444.600h3.600v5.600h-4.600v-3.400h1z" fill="#c4c4c4"/><path d="M771.200 443.800h6v6.400h-4l-2-2z" fill="#c4c4c4"/><path d="M771.200 448.200h2v2" stroke="#525252" stroke-width="0.5" fill="none"/><path d="M785.800 445h5.600 M786.600 445.600l0.400 4.800h3.200l0.400-4.800z M787.600 444h2" stroke="#707070" stroke-width="0.7" fill="#707070"/></svg>
<div class="a" style="left:522.4px;top:37.5px;width:138.6px;height:119.3px;box-shadow:0 1px 4px 1px rgba(0,0,0,0.2)"></div><svg style="left:0;top:0" width="808" height="453" viewBox="0 0 808 453"><rect x="521.4" y="35.5" width="140.60000000000002" height="121.30000000000001" rx="1.4" fill="#393939"/><rect x="522.3" y="57.5" width="138.80000000000007" height="94.30000000000001" fill="#535353"/><path d="M521.4 42.9v-6.0a1.4 1.4 0 0 1 1.4 -1.4h137.8a1.4 1.4 0 0 1 1.4 1.4v6.0z" fill="#434343"/><rect x="521.4" y="43.3" width="140.60000000000002" height="14.2" fill="#424242"/><rect x="522.3" y="152.8" width="138.80000000000007" height="3.1" fill="#505050"/><rect x="586.7" y="153.70000000000002" width="10" height="1.200" fill="#3e3e3e"/><path d="M524.5 38.2l3.2 3.2m0-3.2l-3.2 3.2" stroke="#d0d0d0" stroke-width="0.8" fill="none"/><path d="M656 38.4l-1.400 1.400l1.400 1.400 M658.1 38.4l-1.400 1.400l1.400 1.400" stroke="#a0a0a0" stroke-width="0.6" fill="none"/><path d="M652.6 48.599999999999994h5.800 M652.6 50.599999999999994h5.800 M652.6 52.599999999999994h5.800" stroke="#9a9a9a" stroke-width="0.9"/><rect x="522.3" y="42.9" width="28.700" height="14.800" fill="#535353"/><rect x="551.600" y="43.3" width="43.400" height="13.800" fill="#484848"/><path d="M525.2 49.49999999999999l1-1.1l1 1.1 M525.2 51.099999999999994l1 1.1l1-1.1" stroke="#9a9a9a" stroke-width="0.5" fill="none"/><rect x="524.800" y="61.800" width="3.800" height="3.800" fill="#eee" stroke="#ddd" stroke-width="0.4"/><rect x="526.800" y="63.800" width="4" height="4" fill="#222" stroke="#ddd" stroke-width="0.6"/><path d="M537.600 63.600h2.300c0.900 0 1.400 0.600 1.400 1.500v2.200" stroke="#cfcfcf" stroke-width="0.8" fill="none"/><path d="M538 61.900l-1.900 1.700l1.900 1.700z M539.600 66.700l1.700 1.900l1.700-1.900z" fill="#cfcfcf"/><rect x="530.7" y="77.2" width="10.3" height="10.5" fill="#fff"/><rect x="531.2" y="77.7" width="9.3" height="9.5" fill="#0a0a0a"/><rect x="533.6" y="80.2" width="4.5" height="4.6" fill="#444" stroke="#e6e6e6" stroke-width="0.5"/><rect x="535" y="81.6" width="1.8" height="1.8" fill="none" stroke="#bbb" stroke-width="0.4"/><rect x="524.8" y="71.7" width="10.5" height="10.3" fill="#fff" stroke="#4a4a4a" stroke-width="0.5"/><defs><linearGradient id="sgc" x1="0" x2="1"><stop offset="0" stop-color="#fff"/><stop offset="0.25" stop-color="#fff"/><stop offset="1" stop-color="#00aeef"/></linearGradient><linearGradient id="sgm" x1="0" x2="1"><stop offset="0" stop-color="#fff"/><stop offset="0.25" stop-color="#fff"/><stop offset="1" stop-color="#ec008c"/></linearGradient><linearGradient id="sgy" x1="0" x2="1"><stop offset="0" stop-color="#fff"/><stop offset="0.25" stop-color="#fff"/><stop offset="1" stop-color="#fff200"/></linearGradient><linearGradient id="sgk" x1="0" x2="1"><stop offset="0" stop-color="#fff"/><stop offset="0.25" stop-color="#fff"/><stop offset="1" stop-color="#1a1a1a"/></linearGradient><linearGradient id="sp" x1="0" x2="1"><stop offset="0" stop-color="#e8222c"/><stop offset="0.08" stop-color="#f08a28"/><stop offset="0.17" stop-color="#f6ea2a"/><stop offset="0.30" stop-color="#6cc040"/><stop offset="0.40" stop-color="#1fa24a"/><stop offset="0.54" stop-color="#22b8ea"/><stop offset="0.66" stop-color="#2a4cb0"/><stop offset="0.78" stop-color="#6a3aa0"/><stop offset="0.90" stop-color="#e42a92"/><stop offset="1" stop-color="#e8222c"/></linearGradient><linearGradient id="spv" x1="0" x2="0" y1="0" y2="1"><stop offset="0" stop-color="#fff" stop-opacity="0.9"/><stop offset="0.32" stop-color="#fff" stop-opacity="0"/><stop offset="0.6" stop-color="#000" stop-opacity="0"/><stop offset="1" stop-color="#000" stop-opacity="0.9"/></linearGradient></defs><rect x="561.2" y="66.9" width="63" height="2.400" fill="url(#sgc)"/><path d="M561.3 69.5l2.700 4.200h-5.400z" fill="#bdbdbd"/><rect x="628.9" y="63.2" width="18.5" height="10.2" fill="#484848" stroke="#3c3c3c" stroke-width="0.6"/><rect x="561.2" y="80.9" width="63" height="2.400" fill="url(#sgm)"/><path d="M561.3 83.5l2.700 4.200h-5.400z" fill="#bdbdbd"/><rect x="628.9" y="77.2" width="18.5" height="10.2" fill="#484848" stroke="#3c3c3c" stroke-width="0.6"/><rect x="561.2" y="94.9" width="63" height="2.400" fill="url(#sgy)"/><path d="M561.3 97.5l2.700 4.200h-5.400z" fill="#bdbdbd"/><rect x="628.9" y="91.2" width="18.5" height="10.2" fill="#484848" stroke="#3c3c3c" stroke-width="0.6"/><rect x="561.2" y="109.1" width="63" height="2.400" fill="url(#sgk)"/><path d="M561.3 111.69999999999999l2.700 4.200h-5.400z" fill="#bdbdbd"/><rect x="628.9" y="105.39999999999999" width="18.5" height="10.2" fill="#484848" stroke="#3c3c3c" stroke-width="0.6"/><rect x="525" y="122.6" width="6.6" height="6.8" fill="#fff"/><path d="M525.3 129.1l6-6.2" stroke="#e8212b" stroke-width="1"/><rect x="532.3" y="122.6" width="6.4" height="6.8" fill="#000"/><rect x="539.4" y="122.6" width="6.6" height="6.8" fill="#fff"/><rect x="525.4" y="135.9" width="125.6" height="11.4" fill="url(#sp)"/><rect x="525.4" y="135.9" width="125.6" height="11.4" fill="url(#spv)"/></svg><span class="t" style="left:530.00px;top:47px;font-size:6.5px;color:#ffffff;font-weight:bold;letter-spacing:-0.297px;">Color</span><span class="t" style="left:555.40px;top:47px;font-size:6.5px;color:#c6c6c6;letter-spacing:-0.062px;">Color Guide</span><span class="t" style="left:551.00px;top:66px;font-size:5.9px;color:#d0d0d0;font-weight:bold;">C</span><span class="t" style="left:631.60px;top:65px;font-size:6.3px;color:#e0e0e0;">0</span><span class="t" style="left:649.60px;top:65px;font-size:6.4px;color:#d2d2d2;transform:scaleX(0.74);transform-origin:left center;">%</span><span class="t" style="left:551.00px;top:80px;font-size:5.9px;color:#d0d0d0;font-weight:bold;">M</span><span class="t" style="left:631.60px;top:79px;font-size:6.3px;color:#e0e0e0;">0</span><span class="t" style="left:649.60px;top:79px;font-size:6.4px;color:#d2d2d2;transform:scaleX(0.74);transform-origin:left center;">%</span><span class="t" style="left:551.00px;top:94px;font-size:5.9px;color:#d0d0d0;font-weight:bold;">Y</span><span class="t" style="left:631.60px;top:93px;font-size:6.3px;color:#e0e0e0;">0</span><span class="t" style="left:649.60px;top:93px;font-size:6.4px;color:#d2d2d2;transform:scaleX(0.74);transform-origin:left center;">%</span><span class="t" style="left:551.00px;top:108px;font-size:5.9px;color:#d0d0d0;font-weight:bold;">K</span><span class="t" style="left:631.60px;top:107px;font-size:6.3px;color:#e0e0e0;">0</span><span class="t" style="left:649.60px;top:107px;font-size:6.4px;color:#d2d2d2;transform:scaleX(0.74);transform-origin:left center;">%</span>
<div class="a" style="left:472.3px;top:165.1px;width:133.5px;height:147.6px;box-shadow:0 1px 4px 1px rgba(0,0,0,0.2)"></div><svg style="left:0;top:0" width="808" height="453" viewBox="0 0 808 453"><rect x="471.3" y="163.1" width="135.49999999999994" height="149.6" rx="1.4" fill="#393939"/><rect x="472.2" y="185.29999999999998" width="133.7" height="122.39999999999999" fill="#535353"/><path d="M471.3 170.6v-6.1a1.4 1.4 0 0 1 1.4 -1.4h132.69999999999993a1.4 1.4 0 0 1 1.4 1.4v6.1z" fill="#434343"/><rect x="471.3" y="171.0" width="135.49999999999994" height="14.299999999999999" fill="#424242"/><rect x="472.2" y="308.7" width="133.7" height="3.1" fill="#505050"/><rect x="534.05" y="309.59999999999997" width="10" height="1.200" fill="#3e3e3e"/><path d="M474.40000000000003 165.79999999999998l3.2 3.2m0-3.2l-3.2 3.2" stroke="#d0d0d0" stroke-width="0.8" fill="none"/><path d="M600.8 166.0l-1.400 1.400l1.400 1.400 M602.9 166.0l-1.400 1.400l1.400 1.400" stroke="#a0a0a0" stroke-width="0.6" fill="none"/><path d="M597.4 176.35h5.800 M597.4 178.35h5.800 M597.4 180.35h5.800" stroke="#9a9a9a" stroke-width="0.9"/><rect x="472.2" y="170.6" width="37.200" height="14.900" fill="#535353"/><path d="M474.8 177.25l1-1.1l1 1.1 M474.8 178.85l1 1.1l1-1.1" stroke="#9a9a9a" stroke-width="0.5" fill="none"/><defs><linearGradient id="gg" x1="0" x2="1"><stop offset="0" stop-color="#f4f4f4"/><stop offset="1" stop-color="#3a3a3a"/></linearGradient><linearGradient id="gb" x1="0" x2="1"><stop offset="0" stop-color="#ffffff"/><stop offset="1" stop-color="#242424"/></linearGradient><radialGradient id="gr"><stop offset="0" stop-color="#fff"/><stop offset="1" stop-color="#555"/></radialGradient></defs><rect x="474.6" y="190.3" width="17.4" height="16.7" fill="url(#gg)" stroke="#3c3c3c" stroke-width="0.5"/><path d="M494.2 198l1.1 1.4l1.1-1.4z" fill="#cfcfcf"/><linearGradient id="gg2" x1="0" x2="1"><stop offset="0" stop-color="#3a3a3a"/><stop offset="1" stop-color="#f4f4f4"/></linearGradient><rect x="522.9" y="189.600" width="13.399999999999977" height="13.300" rx="1" fill="#535353" stroke="#606060" stroke-width="0.5"/><rect x="524.9999999999999" y="191.700" width="9.200" height="9.100" fill="url(#gg2)" stroke="#ddd" stroke-width="0.6"/><rect x="537" y="189.600" width="13.399999999999977" height="13.300" rx="1" fill="#535353" stroke="#606060" stroke-width="0.5"/><rect x="539.1" y="191.700" width="9.200" height="9.100" fill="url(#gr)" stroke="#ddd" stroke-width="0.6"/><rect x="550.8" y="189.600" width="13.5" height="13.300" rx="1" fill="#535353" stroke="#606060" stroke-width="0.5"/><rect x="552.9499999999999" y="191.700" width="9.200" height="9.100" fill="#666" stroke="#ddd" stroke-width="0.6"/><path d="M552.9499999999999 197c2.800-3.600 5-0.400 9.200-3.800v7.600h-9.200z" fill="#cfcfcf"/><rect x="522.9" y="206.500" width="11.300000000000068" height="11.300" rx="1" fill="#535353" stroke="#5e5e5e" stroke-width="0.5"/><path d="M525.25 215.6v-7h6.800v2.600h-4v4.400z" fill="#686868" stroke="#777" stroke-width="0.5"/><rect x="535.3" y="206.500" width="12.300000000000068" height="11.300" rx="1" fill="#535353" stroke="#5e5e5e" stroke-width="0.5"/><path d="M538.1500000000001 215.6v-7h6.800v2.600h-4v4.400z" fill="#666" stroke="#777" stroke-width="0.5"/><path d="M538.1500000000001 208.6l2.800 2.600" stroke="#777" stroke-width="0.5"/><rect x="548.6" y="206.500" width="12.100000000000023" height="11.300" rx="1" fill="#535353" stroke="#5e5e5e" stroke-width="0.5"/><path d="M551.3500000000001 208.6h6.800v7h-2.800v-4.400h-4z" fill="#666" stroke="#777" stroke-width="0.5"/><rect x="480.8" y="217" width="10.2" height="10.2" fill="#fff"/><rect x="481.3" y="217.5" width="9.2" height="9.2" fill="#0a0a0a"/><rect x="483.7" y="219.9" width="4.4" height="4.4" fill="#444" stroke="#e6e6e6" stroke-width="0.5"/><rect x="485" y="221.2" width="1.8" height="1.8" fill="none" stroke="#bbb" stroke-width="0.4"/><rect x="474.6" y="211.5" width="10.2" height="9.8" fill="#fff" stroke="#4a4a4a" stroke-width="0.5"/><path d="M478.4 235.4h3.6v2.2h-3.6z M483.2 236.5h2 M480.6 240.6h3.6v2.2h-3.6z M477.4 241.7h2" stroke="#7c7c7c" stroke-width="0.5" fill="none"/><rect x="522.900" y="221.3" width="43.300" height="11.299999999999983" rx="1.4" fill="#5a5a5a"/><path d="M559.4 226.14999999999998l1.6 1.6l1.6-1.6" stroke="#8a8a8a" stroke-width="0.6" fill="none"/><rect x="522.900" y="236.2" width="43.300" height="11.300000000000011" rx="1.4" fill="#5a5a5a"/><path d="M559.4 241.04999999999998l1.6 1.6l1.6-1.6" stroke="#8a8a8a" stroke-width="0.6" fill="none"/><rect x="522.900" y="279" width="43.300" height="10.600000000000023" rx="1.4" fill="#5a5a5a"/><path d="M559.4 283.5l1.6 1.6l1.6-1.6" stroke="#8a8a8a" stroke-width="0.6" fill="none"/><rect x="522.900" y="293.8" width="43.300" height="10.800000000000011" rx="1.4" fill="#5a5a5a"/><path d="M559.4 298.40000000000003l1.6 1.6l1.6-1.6" stroke="#8a8a8a" stroke-width="0.6" fill="none"/><path d="M512 229.6h7 M512 229.6l5.4-5.6 M516.4 229.6a4 4 0 0 0 -1.2-3" stroke="#808080" stroke-width="0.6" fill="none"/><ellipse cx="517" cy="242.6" rx="3" ry="1.8" stroke="#808080" stroke-width="0.6" fill="none"/><path d="M512.2 238.6v6.4 M511.2 239.8l1-1.2l1 1.2 M511.2 243.8l1 1.2l1-1.2" stroke="#808080" stroke-width="0.5" fill="none"/><rect x="480" y="258.9" width="105.7" height="8.3" fill="url(#gb)" stroke="#2e2e2e" stroke-width="0.6"/><path d="M594.2 262.2h5 M595 262.2v5h3.4v-5 M595.8 261.2h1.8" stroke="#707070" stroke-width="0.6" fill="none"/><g transform="translate(482.8 291.4) rotate(45)"><path d="M-1.3 -5.6 a1.3 1.3 0 0 1 2.6 0 v1.8 h0.9 v1.2 h-4.4 v-1.2 h0.9z" fill="#7c7c7c"/><path d="M-1 -2.4 v5.6 l1 1.8 l1-1.8 v-5.6" fill="none" stroke="#7c7c7c" stroke-width="0.7"/></g></svg><span class="t" style="left:480.00px;top:175px;font-size:6.5px;color:#ffffff;font-weight:bold;letter-spacing:-0.242px;">Gradient</span><span class="t" style="left:506.30px;top:192px;font-size:6.3px;color:#f0f0f0;font-weight:bold;letter-spacing:-0.526px;">Type:</span><span class="t" style="left:502.00px;top:209px;font-size:6.3px;color:#8a8a8a;letter-spacing:-0.279px;">Stroke:</span><span class="t" style="left:499.00px;top:281px;font-size:6.3px;color:#8a8a8a;letter-spacing:-0.264px;">Opacity:</span><span class="t" style="left:495.70px;top:296px;font-size:6.3px;color:#8a8a8a;letter-spacing:-0.140px;">Location:</span>
</div>
</body>
</html>
